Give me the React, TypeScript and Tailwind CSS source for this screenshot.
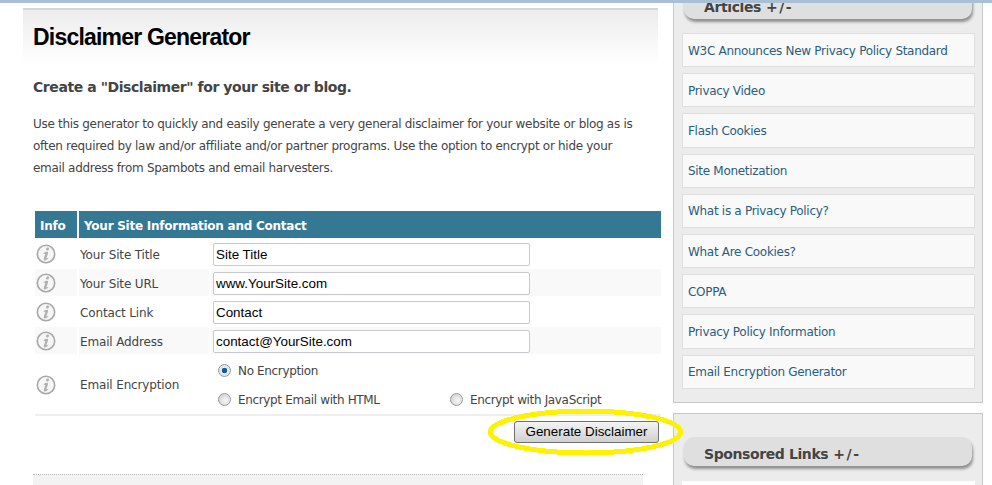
const font = { fontFamily: '"DejaVu Sans", sans-serif' };

function InfoIcon() {
  return (
    <svg width="20" height="20" viewBox="0 0 20 20" className="block">
      <circle cx="10" cy="10" r="8.7" fill="#f6f6f6" stroke="#a8a8a8" strokeWidth="1.6" />
      <path d="M11.3 3.6 Q13.4 3.2 13 5 Q12.6 6.8 10.8 6.5 Q9.6 6 10.2 4.6 Q10.6 3.9 11.3 3.6 Z" fill="#b0b0b0" />
      <path d="M7.6 9.2 Q9.6 7.4 11.6 7.8 Q12.4 8.2 12 9.6 L10.4 14 Q10.4 15 12 13.8 L12.4 14.6 Q10 17 8.2 16.2 Q7.4 15.6 7.9 14.2 L9.4 10 Q9 9.4 7.9 9.9 Z" fill="#b0b0b0" />
    </svg>
  );
}

function Radio({ checked }: { checked?: boolean }) {
  return (
    <span
      className={
        'block w-[13px] h-[13px] rounded-full border border-[#9a9a9a] shrink-0 ' +
        (checked
          ? 'bg-[radial-gradient(circle,#0d5f9e_0,#0d5f9e_32%,#eef2f6_40%,#c8ced4_100%)]'
          : 'bg-[radial-gradient(circle_at_60%_60%,#f6f6f6_0,#dcdcdc_60%,#c4c4c4_100%)]')
      }
    />
  );
}

function Row({ label, value, alt }: { label: string; value: string; alt?: boolean }) {
  return (
    <div className="flex h-[27px] gap-[2px] mb-[2px]">
      <div className={'w-[42px] flex items-center pl-[1px] ' + (alt ? 'bg-[#f9f9f9]' : '')}>
        <InfoIcon />
      </div>
      <div className={'w-[130px] flex items-center pl-[1px] pt-[2px] text-[12px] tracking-[-0.15px] text-[#444] ' + (alt ? 'bg-[#f9f9f9]' : '')}>{label}</div>
      <div className={'flex-1 flex items-center pl-[2px] ' + (alt ? 'bg-[#f9f9f9]' : '')}>
        <div
          className="w-[317px] h-[23px] mt-[1px] flex items-center pl-[2px] pt-[2px] bg-white border border-[#c8c8d0] rounded-[2px] text-[13.4px] text-black"
          style={{ fontFamily: '"Liberation Sans", sans-serif' }}
        >
          {value}
        </div>
      </div>
    </div>
  );
}

const articles = [
  'W3C Announces New Privacy Policy Standard',
  'Privacy Video',
  'Flash Cookies',
  'Site Monetization',
  'What is a Privacy Policy?',
  'What Are Cookies?',
  'COPPA',
  'Privacy Policy Information',
  'Email Encryption Generator',
];

function SideHeader({ title }: { title: string }) {
  return (
    <div className="ml-[2px] mr-[3px] h-[29px] rounded-[10px] bg-[#dfdfdf] shadow-[1px_3px_3px_#8f8f8f] flex items-center pl-[20px] pt-[6px] text-[14px] tracking-[-0.4px] font-bold text-[#444]">
      {title}
      <span className="ml-[5px] tracking-[1.5px] text-[14px]">+/-</span>
    </div>
  );
}

export default function App() {
  return (
    <div className="relative w-[992px] h-[485px] overflow-hidden bg-white flex" style={font}>
      <div className="absolute top-0 left-0 right-0 h-[3px] bg-[#a9bfd6] z-10" />

      <main className="w-[673px] shrink-0 pt-[8px] pl-[23px]">
        <div className="w-[635px] border-t-2 border-[#d4d4d4] h-[56px] bg-gradient-to-b from-[#ececec] to-white pl-[10px] pt-[14px]">
          <h1 className="text-[23px] leading-[27px] font-bold text-black tracking-[-0.8px]" style={{ fontFamily: '"Liberation Sans", sans-serif' }}>
            Disclaimer Generator
          </h1>
        </div>
        <div className="pl-[10px]">
          <h2 className="mt-[13px] text-[14px] leading-[20px] font-bold tracking-[-0.43px] text-[#444]">Create a "Disclaimer" for your site or blog.</h2>
          <p className="mt-[16px] w-[610px] text-[12px] leading-[22px] tracking-[-0.3px] text-[#444]">
            Use this generator to quickly and easily generate a very general disclaimer for your website or blog as is often required by law and/or affiliate and/or partner programs. Use the option to encrypt or hide your email address from Spambots and email harvesters.
          </p>

          <div className="mt-[32px] ml-[2px] w-[626px]">
            <div className="flex gap-[2px] h-[27px] mb-[2px] text-[12px] tracking-[-0.25px] font-bold text-white">
              <div className="w-[42px] bg-[#357894] flex items-center pl-[5px] pt-[2px]">Info</div>
              <div className="flex-1 bg-[#357894] flex items-center pl-[5px] pt-[2px]">Your Site Information and Contact</div>
            </div>
            <Row label="Your Site Title" value="Site Title" />
            <Row label="Your Site URL" value="www.YourSite.com" alt />
            <Row label="Contact Link" value="Contact" />
            <Row label="Email Address" value="contact@YourSite.com" alt />
            <div className="flex h-[60px] gap-[2px] border-b-2 border-[#eeeeee]">
              <div className="w-[42px] flex items-center pl-[1px]"><InfoIcon /></div>
              <div className="w-[130px] flex items-center pl-[1px] text-[12px] tracking-[-0.15px] text-[#444]">Email Encryption</div>
              <div className="flex-1 pl-[7px] text-[12px] tracking-[-0.35px] text-[#444]">
                <div className="h-[29px] flex items-center gap-[7px]"><Radio checked />No Encryption</div>
                <div className="h-[29px] flex items-center">
                  <div className="w-[232px] flex items-center gap-[7px]"><Radio />Encrypt Email with HTML</div>
                  <div className="flex items-center gap-[7px]"><Radio />Encrypt with JavaScript</div>
                </div>
              </div>
            </div>
            <div className="flex justify-end mt-[5px] mr-[2px]">
              <button
                className="w-[145px] h-[22px] rounded-[3px] border border-[#707070] bg-gradient-to-b from-[#f4f4f4] to-[#d0d0d0] text-[13.4px] text-black"
                style={{ fontFamily: '"Liberation Sans", sans-serif' }}
              >
                Generate Disclaimer
              </button>
            </div>
          </div>
          <div className="mt-[31px] w-[610px] h-[20px] border-t border-dotted border-[#b8b8b8] bg-[#f3f3f3]" />
        </div>
      </main>

      <aside className="w-[310px] shrink-0">
        <div className="h-[414px] -mt-[11px] bg-[#ececec] border border-[#c8c8c8] pl-[8px] pr-[7px]">
          <SideHeader title="Articles" />
          <div className="mt-[14px] flex flex-col gap-[6px]">
            {articles.map((a) => (
              <div key={a} className="h-[34.2px] flex items-center pl-[5px] pt-[1px] bg-[#f9f9f9] border border-[#dedede] text-[12px] tracking-[-0.3px] text-[#2a5d7c]">
                {a}
              </div>
            ))}
          </div>
        </div>
        <div className="mt-[10px] h-[100px] bg-[#ececec] border border-[#c8c8c8] pl-[8px] pr-[7px] pt-[23px]">
          <SideHeader title="Sponsored Links" />
          <div className="mt-[15px] h-[40px] bg-white" />
        </div>
      </aside>

      <svg className="absolute left-[485px] top-[407px] z-10" width="201" height="50" viewBox="0 0 201 50" shapeRendering="crispEdges">
        <ellipse cx="100.5" cy="25" rx="95" ry="21" fill="none" stroke="#fff200" strokeWidth="5" />
      </svg>
    </div>
  );
}
